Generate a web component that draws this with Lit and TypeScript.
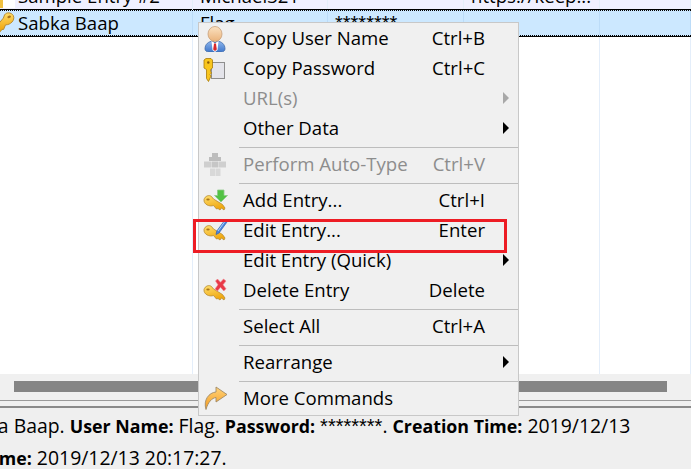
import { LitElement, html, css, svg } from 'lit';
import { customElement } from 'lit/decorators.js';

const key = (t = '') => svg`
  <g transform=${t}>
    <path d="M2 6C3 2.5 7 1 9.5 3L11.5 5.5L20.5 11L23 14.5L22 16.5L19.5 14.5L18 16.5L16 15L14.5 15.5L11.5 12C7.5 13.5 1.5 11 2 6Z"
      fill="url(#gold)" stroke="#b58a32" stroke-width=".8"/>
    <ellipse cx="6" cy="6" rx="1.7" ry="1.1" fill="#a8741a"/>
  </g>`;

const defs = svg`
  <defs>
    <linearGradient id="gold" x1="0" y1="0" x2="0.4" y2="1">
      <stop offset="0" stop-color="#ffe070"/>
      <stop offset="1" stop-color="#f0a810"/>
    </linearGradient>
    <linearGradient id="amber" x1="0" y1="0" x2="0" y2="1">
      <stop offset="0" stop-color="#ffd47c"/>
      <stop offset="1" stop-color="#f59a1c"/>
    </linearGradient>
    <linearGradient id="skin" x1="0" y1="0" x2="0" y2="1">
      <stop offset="0" stop-color="#fbe2c2"/>
      <stop offset="1" stop-color="#eab27a"/>
    </linearGradient>
    <linearGradient id="suit" x1="0" y1="0" x2="0" y2="1">
      <stop offset="0" stop-color="#8fb6ec"/>
      <stop offset="1" stop-color="#3f78cc"/>
    </linearGradient>
  </defs>`;

const icons: Record<string, unknown> = {
  user: svg`
    <path d="M4 25C4 20 7.500 17.500 12 17L14 19L16 17C20.500 17.500 24 20 24 25C24 27 22 28 20 28H8C6 28 4 27 4 25Z" fill="url(#suit)" stroke="#3f6aa8" stroke-width=".8"/>
    <path d="M10.500 17L14 19.500L17.500 17L16.500 26L14 28L11.500 26Z" fill="#fff"/>
    <path d="M13 19.500H15L15.800 25.500L14 27L12.200 25.500Z" fill="#d8282c"/>
    <ellipse cx="14" cy="10" rx="7" ry="7.500" fill="url(#skin)" stroke="#c8a078" stroke-width=".8"/>`,
  password: svg`
    <rect x="10.500" y="8.500" width="13" height="16" fill="#e4e4ea" stroke="#8e8e8e"/>
    <path d="M3 6L5 4.500H10L11.500 6V14L9.500 15.500V17.500L10.500 19L9 20.500L10 22L7.500 27.500L5.500 24.500V15.500L3 14Z" fill="#f8c51e" stroke="#a87a08" stroke-width=".8"/>
    <circle cx="7.300" cy="8.500" r="1.200" fill="#8a5a08"/>`,
  auto: svg`
    <path d="M11 3H17V7H20V11H8V7H11Z" fill="#bdbdbd"/>
    <rect x="3" y="11.500" width="7" height="6" fill="#cfcfcf"/><rect x="10.500" y="11.500" width="7" height="6" fill="#c6c6c6"/><rect x="18" y="11.500" width="7" height="6" fill="#cfcfcf"/>
    <rect x="9" y="18.500" width="5" height="7.500" fill="#d8d8d8"/><rect x="14.500" y="18.500" width="5" height="7.500" fill="#d8d8d8"/>`,
  add: svg`${key('translate(1 7.500)')}<path d="M16.500 4H23V9.500H26.500L20 16L13.500 9.500H16.500Z" fill="#52c244" stroke="#8fc98a" stroke-width=".8"/>`,
  edit: svg`${key('translate(1 7.500)')}<path d="M24 4L26 6L18 17L15 18.500L15.800 15Z" fill="#4a86e0" stroke="#2f5fb0" stroke-width=".7"/><path d="M23.500 6L17 15" stroke="#b4d2f8"/>`,
  del: svg`${key('translate(1 7.500)')}<path d="M14.500 5L16.500 3L19.500 6.300L22.500 3L25 5L22 8.800L25 12.800L22.800 15L19.500 11.300L16.500 15L14 13L17 8.800Z" fill="#e83a48" stroke="#f08890" stroke-width=".6"/>`,
  more: svg`<path d="M5 25.500C2 16 8 8.500 15 8V3L26 10.500L15 18V13.500C11 14 7 18 5 25.500Z" fill="url(#amber)" stroke="#a08a68" stroke-width=".9"/>`,
};

type Item =
  | { sep: true }
  | { label: string; shortcut?: string; icon?: string; off?: boolean; sub?: boolean };

const items: Item[] = [
  { label: 'Copy User Name', shortcut: 'Ctrl+B', icon: 'user' },
  { label: 'Copy Password', shortcut: 'Ctrl+C', icon: 'password' },
  { label: 'URL(s)', off: true, sub: true },
  { label: 'Other Data', sub: true },
  { sep: true },
  { label: 'Perform Auto-Type', shortcut: 'Ctrl+V', icon: 'auto', off: true },
  { sep: true },
  { label: 'Add Entry...', shortcut: 'Ctrl+I', icon: 'add' },
  { label: 'Edit Entry...', shortcut: 'Enter', icon: 'edit' },
  { label: 'Edit Entry (Quick)', sub: true },
  { label: 'Delete Entry', shortcut: 'Delete', icon: 'del' },
  { sep: true },
  { label: 'Select All', shortcut: 'Ctrl+A' },
  { sep: true },
  { label: 'Rearrange', sub: true },
  { sep: true },
  { label: 'More Commands', icon: 'more' },
];

@customElement('app-root')
export class AppRoot extends LitElement {
  static styles = css`
    :host {
      display: flex;
      flex-direction: column;
      position: relative;
      width: 691px;
      height: 469px;
      overflow: hidden;
      background: #f0f0f0;
      font-family: 'Open Sans', 'Noto Sans', sans-serif;
      font-size: 18.6px;
      color: #000;
    }
    .stars { font-family: 'Liberation Sans', sans-serif; font-size: 20px; }
    .list {
      height: 374px;
      background: #fff;
      display: flex;
      flex-direction: column;
    }
    .row {
      display: grid;
      grid-template-columns: 193px 135px 136px 136px 91px;
    }
    .row > div {
      border-right: 1px solid #e4eefa;
      padding-left: 7px;
      white-space: nowrap;
      overflow: hidden;
      box-sizing: border-box;
    }
    .row.prev {
      height: 10px;
      background: #f0f0ff;
    }
    .row.prev > div {
      height: 10px;
      display: flex;
      align-items: flex-end;
    }
    .row.prev span {
      display: block;
      height: 24px;
      line-height: 24px;
      flex: none;
      margin-bottom: 2px;
    }
    .row.prev .first { padding-left: 18px; position: relative; }
    .row.prev .corner {
      position: absolute;
      left: 0;
      top: 0;
      width: 15px;
      height: 8px;
      margin: 0;
      background: #fff;
      border-left: 3px solid #f0c040;
      box-sizing: border-box;
    }
    .row.sel {
      height: 26px;
      box-sizing: border-box;
      background: #cce8ff;
      border-top: 1px dotted #000;
      border-bottom: 1px dotted #000;
      box-shadow: 0 -1px 0 #000, 0 1px 0 #000;
      line-height: 24px;
    }
    .row.sel > div { border-right-color: #bcdcf8; height: 24px; }
    .row.sel .first { padding-left: 18px; position: relative; overflow: visible; }
    .row.sel .first svg { position: absolute; left: -8px; top: 1px; width: 26px; height: 26px; overflow: visible; }
    .row.rest {
      flex: 1;
      margin-top: 1px;
    }
    .track {
      height: 27px;
      padding: 7px 24px 8px 14px;
      box-sizing: border-box;
      border-bottom: 1px solid #9a9a9a;
    }
    .thumb { height: 11px; background: #858585; }
    .gap {
      box-sizing: border-box;
      height: 7px;
      border-bottom: 2px solid #8a8a8a;
    }
    .status {
      flex: 1;
      background: #efefef;
      font-size: 19.4px;
      line-height: 32px;
      overflow: hidden;
      white-space: nowrap;
      padding-top: 2px;
    }
    .status b { font-size: 17.8px; }
    .l1 { margin-left: -94px; }
    .l2 { margin-left: -176px; }
    .menu {
      position: absolute;
      left: 198px;
      top: 22px;
      width: 321px;
      box-sizing: border-box;
      background: #f0f0f0;
      border: 1px solid #c8c8c8;
      padding-bottom: 2px;
    }
    .item {
      height: 30px;
      display: grid;
      grid-template-columns: 44px 1fr auto 33px;
      align-items: center;
    }
    .item svg.ic { width: 28px; height: 28px; margin-left: 2px; display: block; }
    .item .label { white-space: nowrap; margin-top: -2px; }
    .item .short { text-align: right; white-space: nowrap; margin-top: -2px; }
    .item.off { color: #8d8d8d; }
    .arrow {
      justify-self: end;
      margin-left: auto;
      margin-right: 9px;
      width: 0;
      height: 0;
      border-left: 6px solid #000;
      border-top: 6px solid transparent;
      border-bottom: 6px solid transparent;
    }
    .item.off .arrow { border-left-color: #a8a8a8; }
    .sep {
      height: 6px;
      margin-left: 40px;
      box-sizing: border-box;
      padding-top: 4px;
    }
    .sep div { height: 1px; background: #bdbdbd; }
    .mark {
      position: absolute;
      left: 193px;
      top: 219px;
      width: 314px;
      height: 34px;
      box-sizing: border-box;
      border: 3px solid #ed1c24;
      pointer-events: none;
    }
    .defs { position: absolute; width: 0; height: 0; }
  `;

  render() {
    return html`
      <svg class="defs">${defs}</svg>
      <div class="list">
        <div class="row prev">
          <div class="first"><i class="corner"></i><span>Sample Entry #2</span></div>
          <div><span>Michael321</span></div>
          <div><span class="stars">********</span></div>
          <div><span>https://keep...</span></div>
          <div></div>
        </div>
        <div class="row sel">
          <div class="first">
            <svg viewBox="0 0 24 24">${key('translate(24 0) scale(-1 1) rotate(18 12 12)')}</svg>Sabka Baap
          </div>
          <div>Flag</div>
          <div class="stars">********</div>
          <div></div>
          <div></div>
        </div>
        <div class="row rest"><div></div><div></div><div></div><div></div><div></div></div>
      </div>
      <div class="track"><div class="thumb"></div></div>
      <div class="gap"></div>
      <div class="status">
        <div class="l1">Title: Sabka Baap. <b>User Name:</b> Flag. <b>Password:</b> <span class="stars">********</span>. <b>Creation Time:</b> 2019/12/13</div>
        <div class="l2"><b>Last Modification Time:</b> 2019/12/13 20:17:27.</div>
      </div>
      <div class="menu">
        ${items.map((it) =>
          'sep' in it
            ? html`<div class="sep"><div></div></div>`
            : html`<div class="item ${it.off ? 'off' : ''}">
                <div>${it.icon ? html`<svg class="ic" viewBox="0 0 28 28">${icons[it.icon]}</svg>` : ''}</div>
                <div class="label">${it.label}</div>
                <div class="short">${it.shortcut ?? ''}</div>
                <div>${it.sub ? html`<div class="arrow"></div>` : ''}</div>
              </div>`,
        )}
      </div>
      <div class="mark"></div>
    `;
  }
}
